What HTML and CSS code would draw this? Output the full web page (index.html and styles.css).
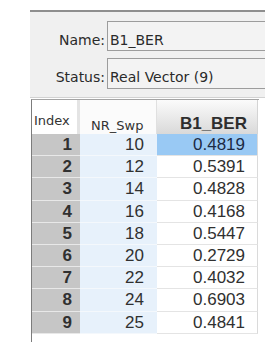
FILE: index.html
```html
<!DOCTYPE html>
<html>
<head>
<meta charset="utf-8">
<link rel="stylesheet" href="styles.css">
</head>
<body>
<div class="panel">
  <div class="field">
    <div class="label">Name:</div>
    <div class="box">B1_BER</div>
  </div>
  <div class="field field-status">
    <div class="label">Status:</div>
    <div class="box">Real Vector (9)</div>
  </div>
</div>
<div class="table">
  <div class="grid">
    <div class="hd hd-index">Index</div>
    <div class="hd hd-nr">NR_Swp</div>
    <div class="hd hd-ber">B1_BER</div>

    <div class="c idx">1</div><div class="c nr">10</div><div class="c ber sel">0.4819</div>
    <div class="c idx">2</div><div class="c nr">12</div><div class="c ber">0.5391</div>
    <div class="c idx">3</div><div class="c nr">14</div><div class="c ber">0.4828</div>
    <div class="c idx">4</div><div class="c nr">16</div><div class="c ber">0.4168</div>
    <div class="c idx">5</div><div class="c nr">18</div><div class="c ber">0.5447</div>
    <div class="c idx">6</div><div class="c nr">20</div><div class="c ber">0.2729</div>
    <div class="c idx">7</div><div class="c nr">22</div><div class="c ber">0.4032</div>
    <div class="c idx">8</div><div class="c nr">24</div><div class="c ber">0.6903</div>
    <div class="c idx">9</div><div class="c nr">25</div><div class="c ber">0.4841</div>
  </div>
</div>
</body>
</html>
```
FILE: styles.css
```css
html, body {
  margin: 0;
  padding: 0;
  background: #ffffff;
}
body {
  width: 272px;
  height: 352px;
  overflow: hidden;
  padding-top: 10px;
  box-sizing: border-box;
}
.panel {
  margin-left: 30px;
  width: 235px;
  background: #f0f0f0;
  border-top: 2px solid #8e8e8e;
  border-bottom: 1px solid #d2d2d2;
  padding: 9px 0 8px;
  display: flex;
  flex-direction: column;
  gap: 7px;
  font-family: "DejaVu Sans", sans-serif;
  font-size: 14px;
  color: #2a2a2a;
}
.field {
  display: flex;
  height: 30px;
}
.field-status {
  height: 31px;
}
.label {
  width: 75px;
  padding-right: 2px;
  text-align: right;
  padding-top: 11px;
  line-height: 16px;
}
.box {
  flex: 1;
  border: 1px solid #9c9c9c;
  border-right: none;
  background: #f3f3f3;
  padding: 10px 0 0 2px;
  line-height: 16px;
}
.table {
  margin-left: 31px;
  width: 228px;
  margin-top: 1px;
  border-top: 1px solid #a4a4a4;
  border-left: 1px solid #7c7c7c;
  height: 243px;
  box-sizing: border-box;
}
.grid {
  display: grid;
  grid-template-columns: 48px 77px 101px;
  grid-template-rows: 34px repeat(9, 22.2px);
}
.hd {
  font-family: "DejaVu Sans", sans-serif;
  font-size: 13px;
  line-height: 15px;
  color: #333;
  box-sizing: border-box;
  overflow: hidden;
}
.hd-index {
  background: #ffffff;
  border-right: 3px solid #e4e4e4;
  padding: 13px 0 0 2px;
}
.hd-nr {
  background: #fbfbfb;
  border-right: 1px solid #e0e0e0;
  padding: 18px 0 0 11px;
}
.hd-ber {
  background: linear-gradient(#fbfbfb, #d9d9d9);
  border-right: 1px solid #d4d4d4;
  font-family: "Liberation Sans", sans-serif;
  font-size: 17px;
  font-weight: bold;
  color: #2e2e2e;
  text-align: right;
  padding: 15px 10px 0 0;
  line-height: 18px;
}
.c {
  font-family: "Liberation Sans", sans-serif;
  font-size: 17px;
  line-height: 21px;
  text-align: right;
  color: #303030;
  box-sizing: border-box;
  border-bottom: 1px solid #e4e4e4;
}
.idx {
  background: #c6c6c6;
  font-weight: bold;
  padding-right: 8px;
  border-bottom-color: #e8e8e8;
}
.nr {
  background: #e7f1fb;
  padding-right: 13px;
  border-bottom-color: #f4f8fc;
}
.ber {
  background: #ffffff;
  padding-right: 12px;
  border-right: 1px solid #dadada;
}
.sel {
  background: #99c9f4;
  color: #1c2a44;
}
```
